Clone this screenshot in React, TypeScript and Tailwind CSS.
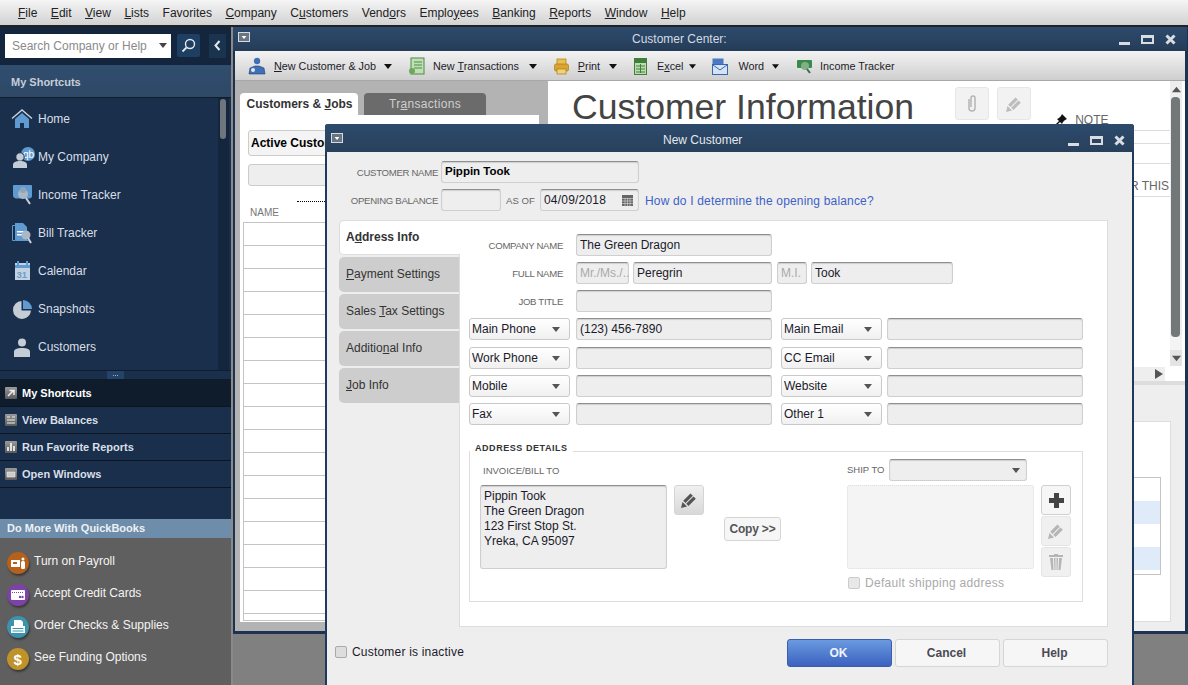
import React from "react";

const FIELD = "bg-[#eeeeee] border border-[#cfcfcf] border-t-[#8f8f8f] rounded-[3px] shadow-[inset_0_1px_1px_#00000022]";
const SELECT = "flex items-center justify-between bg-[linear-gradient(#ffffff,#f0f0f0)] border border-[#c9c9c9] rounded-[3px] h-[22px] w-[101px] pl-[2px] pr-[9px] text-[#1a1a2a]";

function Tri({ c = "#555", w = 8, h = 5 }: { c?: string; w?: number; h?: number }) {
  return (
    <svg width={w} height={h} viewBox="0 0 8 5" className="shrink-0">
      <path d="M0 0h8L4 5z" fill={c} />
    </svg>
  );
}

function SysBox({ cls = "" }: { cls?: string }) {
  return (
    <span className={`flex h-[10px] w-[12px] items-center justify-center border border-[#d5dbe2] bg-[#6a7582] ${cls}`}>
      <Tri c="#ffffff" w={6} h={3} />
    </span>
  );
}

function WinControls() {
  return (
    <span className="flex items-center gap-[11px]">
      <span className="mt-[8px] h-[3px] w-[11px] bg-[#d9dde2]" />
      <span className="h-[9px] w-[13px] border-[2px] border-t-[3px] border-[#d9dde2]" />
      <svg width="11" height="11" viewBox="0 0 11 11">
        <path d="M1.5 1.5l8 8M9.5 1.5l-8 8" stroke="#d9dde2" strokeWidth="3" />
      </svg>
    </span>
  );
}

function Pencil({ c = "#666", s = 18 }: { c?: string; s?: number }) {
  return (
    <svg width={s} height={s} viewBox="0 0 18 18">
      <path d="M1 17l1.500-6 4.500 4.500z" fill={c} />
      <path d="M3.200 9.800L10.500 2.500l2.300 2.300L5.500 12.100zM6.200 12.800L13.500 5.500l2.300 2.300L8.500 15.100z" fill={c} />
    </svg>
  );
}

function Person({ c = "#c4ccd6" }: { c?: string }) {
  return (
    <svg width="16" height="19" viewBox="0 0 16 19">
      <circle cx="8" cy="4.500" r="4" fill={c} />
      <path d="M0 19v-5c0-3 3-4 8-4s8 1 8 4v5z" fill={c} />
    </svg>
  );
}

const HomeI = () => (
  <svg width="22" height="20" viewBox="0 0 22 20">
    <path d="M1 9.5L11 1l10 8.5" fill="none" stroke="#c9d2dc" strokeWidth="1.4" />
    <path d="M4 10l7-6 7 6v9h-5v-5H9v5H4z" fill="#5f9bd0" />
  </svg>
);
const CompanyI = () => (
  <svg width="22" height="21" viewBox="0 0 22 21">
    <circle cx="15" cy="7" r="7" fill="#5f9bd0" />
    <text x="10" y="11" fontSize="10" fill="#fff" fontFamily="Liberation Sans, sans-serif">qb</text>
    <circle cx="7" cy="10" r="4.200" fill="#c4ccd6" stroke="#1a2f4b" strokeWidth="1" />
    <path d="M0 21v-3c0-3 3-4 7-4s7 1 7 4v3z" fill="#c4ccd6" />
  </svg>
);
const IncomeI = () => (
  <svg width="22" height="22" viewBox="0 0 22 22">
    <path d="M2 1h17a1 1 0 011 1v10c0 2-2 2.500-4 2.500H5C2 14.500 1 13 1 11V2a1 1 0 011-1z" fill="#5f9bd0" />
    <circle cx="11" cy="10" r="5" fill="#aab7c4" />
    <path d="M14 14l4 6" stroke="#c9d2dc" strokeWidth="2" />
    <circle cx="11" cy="6" r="3" fill="#8ea5ba" />
  </svg>
);
const BillI = () => (
  <svg width="22" height="22" viewBox="0 0 22 22">
    <path d="M1.500 3.500h3v15h13M1.500 3.500v15h3" fill="none" stroke="#5f9bd0" strokeWidth="1" />
    <path d="M4 1h8l4 4v13H4z" fill="#5f9bd0" />
    <path d="M6 9h7v1.500H6zM6 12h7v1.500H6z" fill="#fff" />
    <circle cx="15" cy="13" r="4.500" fill="#aab7c4" />
    <path d="M17 16l3 5" stroke="#c9d2dc" strokeWidth="2" />
  </svg>
);
const CalI = () => (
  <svg width="16" height="20" viewBox="0 0 16 20">
    <rect x="1" y="2" width="15" height="17" fill="#c2d2e2" />
    <rect x="1" y="4" width="15" height="3" fill="#5f9bd0" />
    <rect x="3" y="0" width="2" height="5" fill="#5f9bd0" />
    <rect x="12" y="0" width="2" height="5" fill="#5f9bd0" />
    <text x="2.500" y="17" fontSize="9.500" fontWeight="700" fill="#6f9cc6" fontFamily="Liberation Sans, sans-serif">31</text>
  </svg>
);
const PieI = () => (
  <svg width="19" height="19" viewBox="0 0 19 19">
    <path d="M8.500 1v9.500H18A9 9 0 118.500 1z" fill="#c4ccd6" />
    <path d="M10 0a9 9 0 019 9h-9z" fill="#5f9bd0" />
  </svg>
);

const NAV = [
  { l: "Home", i: <HomeI />, x: "ml-[11px] mr-[5px]" },
  { l: "My Company", i: <CompanyI />, x: "ml-[13px] mr-[3px]" },
  { l: "Income Tracker", i: <IncomeI />, x: "ml-[12px] mr-[4px]" },
  { l: "Bill Tracker", i: <BillI />, x: "ml-[11px] mr-[5px]" },
  { l: "Calendar", i: <CalI />, x: "ml-[14px] mr-[8px]" },
  { l: "Snapshots", i: <PieI />, x: "ml-[13px] mr-[6px]" },
  { l: "Customers", i: <Person />, x: "ml-[14px] mr-[8px]" },
];

function Mini({ kind }: { kind: string }) {
  return (
    <span className="flex h-[12px] w-[12px] shrink-0 items-center justify-center rounded-[1px] bg-[linear-gradient(#9a9a9a,#5a5a5a)]">
      <svg width="10" height="10" viewBox="0 0 10 10">
        {kind === "a" && <path d="M2 8l5-5M3.500 2.500H8V7" stroke="#eee" strokeWidth="1.500" fill="none" />}
        {kind === "b" && <path d="M1 2h3M6 2h3M1 5h8M1 8h8" stroke="#eee" strokeWidth="1.200" />}
        {kind === "c" && <path d="M2 9V5M5 9V1M8 9V4" stroke="#eee" strokeWidth="1.800" />}
        {kind === "d" && <path d="M1 3h8v5H1z" fill="#ccc" stroke="#eee" strokeWidth=".6" />}
      </svg>
    </span>
  );
}

function Coin({ bg, kind }: { bg: string; kind: string }) {
  return (
    <span className={`flex h-[22px] w-[22px] shrink-0 items-center justify-center rounded-full shadow-[1px_2px_2px_#00000066] ${bg}`}>
      <svg width="16" height="16" viewBox="0 0 16 16">
        {kind === "pay" && (
          <>
            <rect x="1" y="5" width="9" height="7" fill="#fff" />
            <rect x="3" y="7" width="4" height="2" fill="#b5601b" />
            <circle cx="13" cy="4" r="1.500" fill="#fff" />
            <rect x="11" y="6" width="4" height="8" rx="1.500" fill="#fff" />
          </>
        )}
        {kind === "card" && (
          <>
            <rect x="1" y="3" width="14" height="10" rx="1" fill="#fff" />
            <path d="M2 5.500h12" stroke="#7d42a6" strokeDasharray="1 1" />
            <circle cx="10" cy="10" r="1.200" fill="#7d42a6" />
            <circle cx="12.500" cy="10" r="1.200" fill="#7d42a6" />
          </>
        )}
        {kind === "chk" && (
          <>
            <path d="M4 1h7l2 2v4H4z" fill="#fff" />
            <rect x="1" y="7" width="14" height="7" fill="#fff" />
            <path d="M2.500 9.500h11M2.500 12h11" stroke="#3c93ad" />
          </>
        )}
        {kind === "usd" && (
          <text x="3.500" y="14" fontSize="15" fontWeight="700" fill="#fff" fontFamily="Liberation Sans, sans-serif">$</text>
        )}
      </svg>
    </span>
  );
}

function Sidebar() {
  return (
    <aside className="flex h-[658px] w-[231px] shrink-0 flex-col text-[#d8dfe8]">
      <div className="flex h-[38px] items-center bg-[#14263d] pb-[1px] pl-[5px]">
        <div className="flex h-[24px] w-[166px] items-center justify-between bg-white pl-[7px] pr-[4px] text-[#8a8a8a]">
          <span>Search Company or Help</span>
          <Tri c="#444" />
        </div>
        <div className="ml-[6px] flex h-[23px] w-[23px] items-center justify-center rounded-[2px] bg-[#1e3e62]">
          <svg width="15" height="15" viewBox="0 0 15 15" fill="none">
            <circle cx="9" cy="6" r="4.500" stroke="#e5e8ec" strokeWidth="1.400" />
            <path d="M5.500 9.500L1.500 13.500" stroke="#e5e8ec" strokeWidth="1.800" />
          </svg>
        </div>
        <div className="ml-[9px] flex h-[24px] w-[17px] items-center justify-center bg-[#1a3450]">
          <svg width="7" height="11" viewBox="0 0 7 11" fill="none">
            <path d="M5.500 1L1.500 5.500l4 4.500" stroke="#e5e8ec" strokeWidth="2" />
          </svg>
        </div>
      </div>
      <div className="flex h-[33px] items-center border-b border-[#0f1d2e] pl-[11px] pt-[2px] text-[11px] font-bold text-[#c5ced8] [background-image:radial-gradient(#ffffff14_1px,transparent_1px),linear-gradient(#1f3f63,#1c3858)] [background-size:2px_2px,auto]">
        My Shortcuts
      </div>
      <div className="flex h-[272px] bg-[#1a2f4b]">
        <div className="flex-1 pt-[2px]">
          {NAV.map((n) => (
            <div key={n.l} className="flex h-[38px] items-center">
              <span className={`flex justify-center ${n.x}`}>{n.i}</span>
              <span className="text-[12px]">{n.l}</span>
            </div>
          ))}
        </div>
        <div className="mr-[2px] h-[272px] w-[11px] bg-[#14263d] pl-[2px] pt-[1px]">
          <div className="h-[40px] w-[6px] rounded-[3px] bg-[#6f757c]" />
        </div>
      </div>
      <div className="flex h-[9px] justify-center border-t border-[#0f1d2e] bg-[#1a2f4b]">
        <span className="flex w-[17px] items-center justify-center gap-[1px] bg-[#234468]">
          <i className="h-[1px] w-[1px] bg-[#aab]" /><i className="h-[1px] w-[1px] bg-[#aab]" /><i className="h-[1px] w-[1px] bg-[#aab]" />
        </span>
      </div>
      <div className="flex h-[28px] items-center gap-[5px] border-b border-[#0b1622] bg-[#0f1c2b] pl-[5px] pt-[1px] text-[11px] font-bold text-white"><Mini kind="a" />My Shortcuts</div>
      <div className="flex h-[27px] items-center gap-[5px] border-b border-[#0b1622] bg-[#1a2f4b] pl-[5px] text-[11px] font-bold"><Mini kind="b" />View Balances</div>
      <div className="flex h-[27px] items-center gap-[5px] border-b border-[#0b1622] bg-[#1a2f4b] pl-[5px] text-[11px] font-bold"><Mini kind="c" />Run Favorite Reports</div>
      <div className="flex h-[27px] items-center gap-[5px] border-b border-[#0b1622] bg-[#1a2f4b] pl-[5px] text-[11px] font-bold"><Mini kind="d" />Open Windows</div>
      <div className="h-[31px] bg-[#1a2f4b]" />
      <div className="flex h-[19px] items-center bg-[#6d8dab] pl-[7px] text-[11px] font-bold text-[#eef1f4]">Do More With QuickBooks</div>
      <div className="flex-1 bg-[#5f5f5f] pl-[7px] pt-[9px] text-[12px] text-[#f4f4f4]">
        <div className="flex h-[32px] items-center gap-[5px]"><Coin bg="bg-[#b5601b]" kind="pay" /><span className="-mt-[4px]">Turn on Payroll</span></div>
        <div className="flex h-[32px] items-center gap-[5px]"><Coin bg="bg-[#7d42a6]" kind="card" /><span className="-mt-[4px]">Accept Credit Cards</span></div>
        <div className="flex h-[32px] items-center gap-[5px]"><Coin bg="bg-[#3c93ad]" kind="chk" /><span className="-mt-[4px]">Order Checks &amp; Supplies</span></div>
        <div className="flex h-[32px] items-center gap-[5px]"><Coin bg="bg-[#c0922a]" kind="usd" /><span className="-mt-[4px]">See Funding Options</span></div>
      </div>
    </aside>
  );
}

function Toolbar() {
  return (
    <div className="flex h-[30px] items-center border-b border-[#a8a8a8] bg-[linear-gradient(#f3f3f3,#cfcfcf)] pt-[1px] text-[10.800px] text-[#1c1c2a]">
      <svg className="ml-[13px]" width="18" height="18" viewBox="0 0 18 18">
        <circle cx="9" cy="4" r="3.200" fill="#3f6fb5" />
        <path d="M1 17l1-6 5-2h4l5 2 1 6z" fill="#3f6fb5" stroke="#1e3e72" strokeWidth=".6" />
        <circle cx="5" cy="13" r="2" fill="#dfe8f4" />
      </svg>
      <span className="ml-[8px]"><u>N</u>ew Customer &amp; Job</span>
      <span className="ml-[8px]"><Tri c="#111" /></span>
      <svg className="ml-[16px]" width="17" height="18" viewBox="0 0 17 18">
        <rect x="3" y="1" width="13" height="16" fill="#bfe0b4" stroke="#4f8a46" />
        <path d="M6 5h8M6 8h8M6 11h8" stroke="#4f8a46" />
        <circle cx="4" cy="14" r="3" fill="#6ca85e" />
      </svg>
      <span className="ml-[8px]">New <u>T</u>ransactions</span>
      <span className="ml-[10px]"><Tri c="#111" /></span>
      <svg className="ml-[17px]" width="15" height="17" viewBox="0 0 15 17">
        <rect x="3" y="1" width="9" height="6" fill="#e9c04e" stroke="#a67c1c" strokeWidth=".7" />
        <rect x="0.500" y="6" width="14" height="7" rx="1.500" fill="#d9a52e" stroke="#a67c1c" strokeWidth=".7" />
        <rect x="3" y="11" width="9" height="5" fill="#f0d27a" stroke="#a67c1c" strokeWidth=".7" />
      </svg>
      <span className="ml-[9px]"><u>P</u>rint</span>
      <span className="ml-[9px]"><Tri c="#111" /></span>
      <svg className="ml-[17px]" width="13" height="17" viewBox="0 0 13 17">
        <rect x=".5" y=".5" width="12" height="16" fill="#bfdcb0" stroke="#3f7f3c" />
        <rect x="1" y="1" width="11" height="4" fill="#3f7f3c" />
        <path d="M2 8h9M2 11h9M2 14h9M6.500 6v9" stroke="#3f7f3c" />
      </svg>
      <span className="ml-[10px]">E<u>x</u>cel</span>
      <span className="ml-[6px]"><Tri c="#111" w={7} /></span>
      <svg className="ml-[16px]" width="16" height="17" viewBox="0 0 16 17">
        <rect x=".5" y=".5" width="11" height="9" fill="#4c78c4" />
        <rect x=".5" y="6.500" width="15" height="10" fill="#d6e3f5" stroke="#3a66ae" />
        <path d="M1 7l7 5 7-5" fill="none" stroke="#3a66ae" />
      </svg>
      <span className="ml-[10px]">Word</span>
      <span className="ml-[8px]"><Tri c="#111" w={7} /></span>
      <svg className="ml-[18px]" width="15" height="15" viewBox="0 0 15 15">
        <rect x="0" y="1" width="15" height="8" rx="1" fill="#3c8a4a" />
        <circle cx="8" cy="7" r="4" fill="#7fb08a" />
        <path d="M10 10l3 4" stroke="#3c6a4a" strokeWidth="2" />
      </svg>
      <span className="ml-[8px]">Income Tracker</span>
    </div>
  );
}

function LeftPane() {
  const rows = Array.from({ length: 17 });
  return (
    <div className="w-[299px] shrink-0">
      <div className="flex items-end">
        <div className="flex h-[22px] w-[118px] items-center justify-center rounded-t-[4px] bg-white pl-[1px] text-[12px] font-bold text-[#333]"><span>Customers &amp; <u>J</u>obs</span></div>
        <div className="ml-[6px] flex h-[22px] w-[122px] items-center justify-center rounded-t-[4px] bg-[#6b6b6b] text-[12px] tracking-[0.3px] text-[#cfcfcf]"><span>Tr<u>a</u>nsactions</span></div>
      </div>
      <div className="h-[507px] bg-white pl-[3px]">
        <div className="ml-[5px] flex pt-[15px]">
          <div className="flex h-[26px] w-[200px] items-center rounded-[3px] border border-[#ccc] bg-[#f4f4f4] pl-[2px] text-[12px] font-bold text-black">Active Customers</div>
        </div>
        <div className="ml-[5px] mt-[8px] h-[22px] w-[200px] rounded-[3px] border border-[#ccc] bg-[#eeeeee]" />
        <div className="relative mt-[18px] h-[18px] pl-[7px] text-[10px] leading-[17px] text-[#777]">
          NAME
          <span className="absolute left-[54px] -top-[3px] w-[40px] border-t border-dotted border-black" />
        </div>
        <div className="border-l border-t border-[#c4c4c4]">
          {rows.map((_, i) => (
            <div key={i} className="h-[23px] border-b border-[#c4c4c4]" />
          ))}
          <div className="h-[7px] border-b border-[#c4c4c4]" />
        </div>
      </div>
    </div>
  );
}

function RightPane() {
  return (
    <div className="flex w-[637px] shrink-0 flex-col">
      <div className="flex h-[300px] bg-white">
        <div className="relative w-[622px] overflow-hidden">
          <div className="flex h-[286px] items-start">
            <div className="ml-[24px] mt-[6px] w-[384px] whitespace-nowrap text-[35.600px] leading-[41px] text-[#444]">Customer Information</div>
            <div className="mt-[6px] flex h-[33px] w-[34px] items-center justify-center rounded-[3px] border border-[#e6e6e6] bg-[#f2f2f2]">
              <svg width="12" height="20" viewBox="0 0 12 20" fill="none"><path d="M3 5v9a3 3 0 006 0V4a2 2 0 00-4 0v9" stroke="#b5b5b5" strokeWidth="1.500" /></svg>
            </div>
            <div className="ml-[8px] mt-[6px] flex h-[33px] w-[34px] items-center justify-center rounded-[3px] border border-[#e6e6e6] bg-[#f2f2f2]"><Pencil c="#bdbdbd" /></div>
            <div className="ml-[21px] w-[118px] overflow-hidden whitespace-nowrap pt-[32px] text-[12px] text-[#666]">
              <div className="flex h-[12px] items-center gap-[8px] pl-[3px] pt-[1px]">
                <svg width="12" height="12" viewBox="0 0 12 12"><path d="M7 0l5 5-2 1-2 2-1 2-2-2-4 4-1-1 4-4-2-2 2-1 2-2z" fill="#111" /></svg>
                NOTE
              </div>
              <div className="mt-[5px] border-t border-[#dddddd]" />
              <div className="mt-[12px] border-t border-[#dddddd]" />
              <div className="mt-[19px] border-t border-[#dddddd]" />
              <div className="mt-[15px] h-[14px] leading-[14px]">REPORTS FOR THIS CUSTOMER:JOB</div>
              <div className="mt-[3px] border-t border-[#dddddd]" />
            </div>
          </div>
          <div className="flex h-[14px] justify-end bg-white pr-[5px]">
            <div className="w-[30px] bg-[#eeeeee]" />
            <div className="flex w-[13px] items-center justify-center bg-[#eeeeee]">
              <svg width="8" height="10" viewBox="0 0 8 10"><path d="M0 0l8 5-8 5z" fill="#555" /></svg>
            </div>
          </div>
        </div>
        <div className="flex w-[12px] flex-col bg-[#eeeeee]">
          <div className="flex h-[16px] items-center justify-center"><svg width="9" height="7" viewBox="0 0 8 5"><path d="M0 5h8L4 0z" fill="#555" /></svg></div>
          <div className="ml-[1px] h-[240px] w-[9px] rounded-[4px] bg-[#727878]" />
          <div className="h-[13px] bg-[#f4f4f4]" />
          <div className="flex h-[16px] items-center justify-center bg-[#e4e4e4]"><Tri c="#555" w={9} h={7} /></div>
          <div className="h-[15px] bg-white" />
        </div>
      </div>
      <div className="h-[4px] bg-[#dddddd]" />
      <div className="h-[246px] bg-[#eeeeee] pt-[36px]">
        <div className="h-[201px] w-[623px] border-b border-r border-t border-[#dddddd] bg-white pt-[55px]">
          <div className="h-[98px] w-[613px] border border-l-0 border-[#c4c4c4] text-[0px]">
            <div className="h-[23px]" />
            <div className="h-[23px] bg-[#e0ebf9]" />
            <div className="h-[23px]" />
            <div className="h-[23px] bg-[#e0ebf9]" />
          </div>
        </div>
      </div>
    </div>
  );
}

function Field({ w, children, cls = "" }: { w: string; children?: React.ReactNode; cls?: string }) {
  return <div className={`flex h-[22px] shrink-0 items-center pl-[3px] text-[#1a1a2a] ${FIELD} ${w} ${cls}`}>{children}</div>;
}

function Sel({ label, w = "w-[101px]" }: { label: string; w?: string }) {
  return (
    <div className={`${SELECT} ${w} shrink-0`}>
      <span>{label}</span>
      <Tri c="#555" />
    </div>
  );
}

function PhoneRow({ a, b, v, mt }: { a: string; b: string; v?: string; mt: string }) {
  return (
    <div className={`flex pl-[9px] ${mt}`}>
      <Sel label={a} />
      <Field w="ml-[6px] w-[196px]">{v}</Field>
      <div className="ml-[9px]"><Sel label={b} /></div>
      <Field w="ml-[5px] w-[196px]" />
    </div>
  );
}

function Tab({ children }: { children: React.ReactNode }) {
  return <div className="flex h-[35px] items-center rounded-l-[5px] bg-[#cdcdcd] pb-[2px] pl-[7px] text-[#333]"><span>{children}</span></div>;
}

function Dialog() {
  const lab = "mt-[2px] text-[9.600px] tracking-[-0.3px] text-[#666]";
  return (
    <div className="absolute left-[325px] top-[124px] z-20 flex h-[561px] w-[809px] flex-col rounded-t-[3px] border-x-[2px] border-[#1d3a5c] text-[12px] text-[#1a1a2a]">
      <div className="-mx-[2px] flex h-[28px] shrink-0 items-center rounded-t-[3px] pl-[6px] [background-image:radial-gradient(#ffffff10_1px,transparent_1px),linear-gradient(#1f3f63,#1a3351)] [background-size:2px_2px,auto]">
        <SysBox />
        <span className="ml-[320px] mt-[4px] text-[#e4e8ec]">New Customer</span>
        <span className="ml-auto mt-[4px] pr-[9px]"><WinControls /></span>
      </div>
      <div className="flex-1 bg-[#eeeeee]">
        <div className="mt-[9px] flex h-[22px] items-center">
          <span className={`w-[111px] text-right ${lab}`}>CUSTOMER NAME</span>
          <Field w="ml-[3px] w-[198px]" cls="text-[11.500px] font-bold text-black">Pippin Took</Field>
        </div>
        <div className="mt-[6px] flex h-[22px] items-center">
          <span className={`w-[111px] text-right ${lab}`}>OPENING BALANCE</span>
          <Field w="ml-[3px] w-[60px]" />
          <span className="ml-[5px] mt-[2px] w-[34px] text-[9.600px] text-[#666]">AS OF</span>
          <Field w="w-[99px]" cls="justify-between pr-[5px] tracking-[0.2px]">
            04/09/2018
            <svg width="11" height="11" viewBox="0 0 11 11"><rect width="11" height="11" fill="#666" /><path d="M0 3.500h11M0 6h11M0 8.500h11M3 3v8M5.500 3v8M8 3v8" stroke="#ddd" strokeWidth=".6" /></svg>
          </Field>
          <span className="ml-[6px] mt-[1px] tracking-[0.17px] text-[#3f5fc8]">How do I determine the opening balance?</span>
        </div>
        <div className="mt-[9px] flex h-[407px]">
          <div className="z-10 ml-[12px] flex w-[121px] shrink-0 flex-col gap-[2px] pr-[1px]">
            <div className="-mr-[1px] flex h-[35px] items-center rounded-l-[5px] border border-r-0 border-[#dddddd] bg-white pb-[2px] pl-[6px] font-bold text-[#333]"><span>A<u>d</u>dress Info</span></div>
            <Tab><u>P</u>ayment Settings</Tab>
            <Tab>Sales <u>T</u>ax Settings</Tab>
            <Tab>Additio<u>n</u>al Info</Tab>
            <Tab><u>J</u>ob Info</Tab>
          </div>
          <div className="-ml-[1px] h-[407px] w-[649px] shrink-0 border border-[#dddddd] bg-white pt-[13px]">
            <div className="flex h-[22px] items-center">
              <span className={`w-[103px] text-right ${lab}`}>COMPANY NAME</span>
              <Field w="ml-[13px] w-[196px]">The Green Dragon</Field>
            </div>
            <div className="mt-[6px] flex h-[22px] items-center">
              <span className={`w-[103px] text-right ${lab}`}>FULL NAME</span>
              <Field w="ml-[13px] w-[53px]" cls="text-[#aaaaaa]">Mr./Ms./..</Field>
              <Field w="ml-[4px] w-[139px]">Peregrin</Field>
              <Field w="ml-[5px] w-[30px]" cls="text-[#aaaaaa]">M.I.</Field>
              <Field w="ml-[4px] w-[142px]">Took</Field>
            </div>
            <div className="mt-[6px] flex h-[22px] items-center">
              <span className={`w-[103px] text-right ${lab}`}>JOB TITLE</span>
              <Field w="ml-[13px] w-[196px]" />
            </div>
            <PhoneRow a="Main Phone" b="Main Email" v="(123) 456-7890" mt="mt-[6px]" />
            <PhoneRow a="Work Phone" b="CC Email" mt="mt-[7px]" />
            <PhoneRow a="Mobile" b="Website" mt="mt-[6px]" />
            <PhoneRow a="Fax" b="Other 1" mt="mt-[6px]" />
            <div className="relative ml-[9px] mt-[26px] flex h-[151px] w-[614px] border border-[#dddddd]">
              <span className="absolute -top-[11px] left-0 bg-white px-[5px] text-[9px] font-bold leading-[14px] tracking-[0.55px] text-[#333]">ADDRESS DETAILS</span>
              <div className="ml-[10px] pt-[12px]">
                <div className="h-[14px] pl-[3px] text-[9.500px] leading-[14px] text-[#666]">INVOICE/BILL TO</div>
                <div className="mt-[7px] flex items-start">
                  <div className={`h-[84px] w-[187px] pl-[3px] pt-[3px] leading-[15px] ${FIELD}`}>
                    Pippin Took<br />The Green Dragon<br />123 First Stop St.<br />Yreka, CA 95097
                  </div>
                  <div className="ml-[7px] flex h-[30px] w-[30px] items-center justify-center rounded-[3px] border border-[#d5d5d5] bg-[linear-gradient(#f0f0f0,#d8d8d8)]"><Pencil c="#555" /></div>
                  <div className="ml-[20px] mt-[32px] flex h-[24px] w-[57px] items-center justify-center rounded-[3px] border border-[#d5d5d5] bg-[#f6f6f6] font-bold tracking-[-0.2px] text-[#555]">Copy &gt;&gt;</div>
                </div>
              </div>
              <div className="ml-[66px] pt-[7px]">
                <div className="flex h-[22px] items-center">
                  <span className="w-[42px] text-[9.500px] text-[#666]">SHIP TO</span>
                  <div className={`flex h-[22px] w-[138px] items-center justify-end pr-[6px] ${FIELD}`}><Tri c="#555" /></div>
                </div>
                <div className="mt-[4px] flex items-start">
                  <div>
                    <div className="h-[84px] w-[187px] rounded-[3px] border border-dotted border-[#dddddd] bg-[#f4f4f4]" />
                    <div className="mt-[5px] flex items-center gap-[5px] pl-[1px] text-[#aaaaaa]">
                      <span className="h-[12px] w-[12px] rounded-[2px] border border-[#cccccc] bg-[#e8e8e8]" />
                      <span className="tracking-[0.3px]">Default shipping address</span>
                    </div>
                  </div>
                  <div className="ml-[7px] flex flex-col gap-[1px]">
                    <div className="flex h-[30px] w-[30px] items-center justify-center rounded-[3px] border border-[#cfcfcf] bg-[#f6f6f6]">
                      <svg width="15" height="15" viewBox="0 0 15 15"><path d="M5 0h5v5h5v5h-5v5H5v-5H0V5h5z" fill="#444" /></svg>
                    </div>
                    <div className="flex h-[30px] w-[30px] items-center justify-center rounded-[3px] border border-[#e4e4e4] bg-[#f0f0f0]"><Pencil c="#b5b5b5" /></div>
                    <div className="flex h-[30px] w-[30px] items-center justify-center rounded-[3px] border border-[#e4e4e4] bg-[#f0f0f0]">
                      <svg width="14" height="16" viewBox="0 0 14 16"><path d="M5 0h4v1h5v2H0V1h5zM1 4h3l.500 12H2.500zM5 4h1.500v12H5.500zM7.500 4H9l-.5 12h-1zM10 4h3l-1.500 12h-2z" fill="#b5b5b5" /></svg>
                    </div>
                  </div>
                </div>
              </div>
            </div>
          </div>
        </div>
        <div className="mt-[12px] flex h-[28px] items-center pl-[8px] pr-[24px]">
          <span className="-mt-[2px] h-[12px] w-[12px] rounded-[2px] border border-[#aaaaaa] bg-[#dddddd]" />
          <span className="-mt-[2px] ml-[5px] tracking-[0.2px]">Customer is inactive</span>
          <div className="ml-auto flex gap-[3px] font-bold">
            <div className="flex h-[28px] w-[105px] items-center justify-center rounded-[3px] border border-[#3a5fa8] bg-[linear-gradient(#6a9ae0,#3b62c0)] pr-[2px] text-[#f0f4fa]">OK</div>
            <div className="flex h-[28px] w-[105px] items-center justify-center rounded-[3px] border border-[#d5d5d5] bg-[#f6f6f6] pr-[2px] text-[#4a4a55]">Cancel</div>
            <div className="flex h-[28px] w-[105px] items-center justify-center rounded-[3px] border border-[#d5d5d5] bg-[#f6f6f6] pr-[2px] text-[#4a4a55]">Help</div>
          </div>
        </div>
      </div>
    </div>
  );
}

export default function App() {
  const menu: React.ReactNode[] = [
    <><u>F</u>ile</>, <><u>E</u>dit</>, <><u>V</u>iew</>, <><u>L</u>ists</>, <>Favorites</>, <><u>C</u>ompany</>,
    <>C<u>u</u>stomers</>, <>Vend<u>o</u>rs</>, <>Emplo<u>y</u>ees</>, <><u>B</u>anking</>, <><u>R</u>eports</>, <><u>W</u>indow</>, <><u>H</u>elp</>,
  ];
  return (
    <div className="relative h-[685px] w-[1188px] overflow-hidden bg-[#808080] font-['Liberation_Sans',Arial,sans-serif] text-[12px]">
      <div className="flex h-[27px] items-center gap-[13.500px] border-b-[2px] border-[#222] bg-[linear-gradient(#f5f5f5,#d2d2d2)] pl-[18px] text-[#222]">
        {menu.map((m, i) => (
          <span key={i}>{m}</span>
        ))}
      </div>
      <div className="flex">
        <Sidebar />
        <div className="w-[2px] shrink-0 bg-[#8a8a8a]" />
        <div className="h-[607px] w-[955px] shrink-0 border-x-[2px] border-b-[3px] border-[#1b3350] border-r-[3px]">
          <div className="-mx-[2px] flex h-[24px] items-center pl-[5px] [background-image:radial-gradient(#ffffff10_1px,transparent_1px),linear-gradient(#1f3f63,#172f4c)] [background-size:2px_2px,auto]">
            <SysBox cls="mb-[4px]" />
            <span className="ml-[382px] text-[#d5dbe2]">Customer Center:</span>
            <span className="ml-auto pr-[11px]"><WinControls /></span>
          </div>
          <Toolbar />
          <div className="flex h-[550px] bg-[#b3b3b3] pl-[5px] pt-[12px]">
            <LeftPane />
            <div className="-mt-[12px] ml-[9px]"><RightPane /></div>
          </div>
        </div>
      </div>
      <Dialog />
    </div>
  );
}
